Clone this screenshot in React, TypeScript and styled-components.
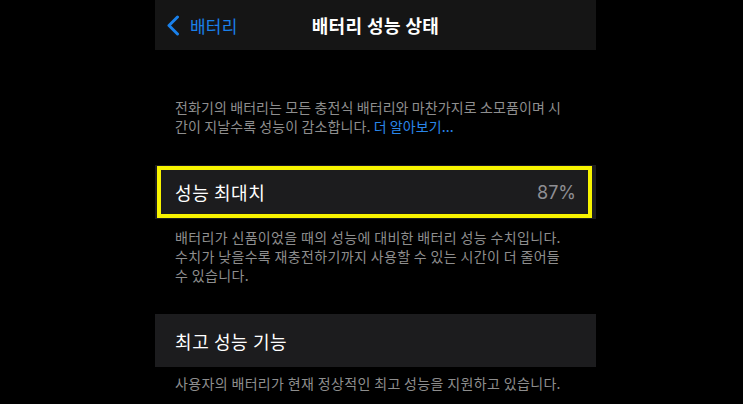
import React from 'react'
import styled, { createGlobalStyle } from 'styled-components'

const GlobalStyle = createGlobalStyle`
    html, body {
        margin: 0;
        padding: 0;
        background: #000;
    }
    body {
        font-family: "Noto Sans CJK KR", "Noto Sans", sans-serif;
        -webkit-font-smoothing: antialiased;
    }
`;

const App = () => {
    return (
        <>
            <GlobalStyle />
            <Screen>
                <Column>
                    <NavBar>
                        <BackButton>
                            <svg width="14" height="21" viewBox="0 0 14 21">
                                <polyline
                                    points="11.5,2 3,10.5 11.5,19"
                                    fill="none"
                                    stroke="#1a80ea"
                                    strokeWidth="3"
                                    strokeLinecap="round"
                                    strokeLinejoin="round"
                                />
                            </svg>
                            <span>배터리</span>
                        </BackButton>
                        <Title>배터리 성능 상태</Title>
                        <span />
                    </NavBar>

                    <Intro>
                        전화기의 배터리는 모든 충전식 배터리와 마찬가지로 소모품이며 시<br />
                        간이 지날수록 성능이 감소합니다. <Link>더 알아보기...</Link>
                    </Intro>

                    <Cell $highlight>
                        <CellLabel>성능 최대치</CellLabel>
                        <CellValue>87%</CellValue>
                        <Highlight />
                    </Cell>
                    <Footnote>
                        배터리가 신품이었을 때의 성능에 대비한 배터리 성능 수치입니다.<br />
                        수치가 낮을수록 재충전하기까지 사용할 수 있는 시간이 더 줄어들<br />
                        수 있습니다.
                    </Footnote>

                    <Cell $gap={29}>
                        <CellLabel>최고 성능 기능</CellLabel>
                    </Cell>
                    <Footnote $top={7}>
                        사용자의 배터리가 현재 정상적인 최고 성능을 지원하고 있습니다.
                    </Footnote>
                </Column>
            </Screen>
        </>
    )
}

const Screen = styled.div`
    width: 743px;
    height: 404px;
    overflow: hidden;
    background: #000;
    padding-left: 155px;
    box-sizing: border-box;
`;

const Column = styled.div`
    width: 441px;
    display: flex;
    flex-direction: column;
`;

const NavBar = styled.div`
    height: 50px;
    background: #151515;
    display: grid;
    grid-template-columns: 1fr auto 1fr;
    align-items: center;
`;

const BackButton = styled.div`
    display: flex;
    align-items: center;
    gap: 10px;
    padding-left: 11px;
    color: #1a80ea;
    font-size: 17px;
    letter-spacing: 0.2px;
    cursor: pointer;

    & svg {
        display: block;
    }
`;

const Title = styled.div`
    color: #fff;
    font-size: 18px;
    font-weight: 600;
    letter-spacing: 0.4px;
`;

const Intro = styled.p`
    margin: 0;
    padding: 48px 20px 0;
    color: #8e8e8e;
    font-size: 14px;
    letter-spacing: 0.1px;
    line-height: 18.5px;
    white-space: nowrap;
`;

const Link = styled.span`
    color: #2a86ea;
`;

const Cell = styled.div<{ $highlight?: boolean; $gap?: number }>`
    position: relative;
    height: ${p => (p.$highlight ? 54 : 53)}px;
    margin-top: ${p => p.$gap ?? 30}px;
    padding: 0 20px;
    background: #1c1c1e;
    display: flex;
    align-items: center;
    justify-content: space-between;
`;

const CellLabel = styled.div`
    color: #fff;
    font-size: 18px;
    letter-spacing: 0.6px;
`;

const CellValue = styled.div`
    color: #8e8e93;
    font-size: 18px;
    font-family: "Inter", "Liberation Sans", sans-serif;
`;

const Highlight = styled.div`
    position: absolute;
    left: 2px;
    right: 4px;
    top: 1px;
    bottom: 1px;
    border: 4px solid #f7f300;
    pointer-events: none;
`;

const Footnote = styled.p<{ $top?: number }>`
    margin: 0;
    padding: ${p => p.$top ?? 9}px 20px 0;
    color: #8e8e8e;
    font-size: 14px;
    letter-spacing: 0.35px;
    line-height: 19px;
    white-space: nowrap;
`;

export default App
